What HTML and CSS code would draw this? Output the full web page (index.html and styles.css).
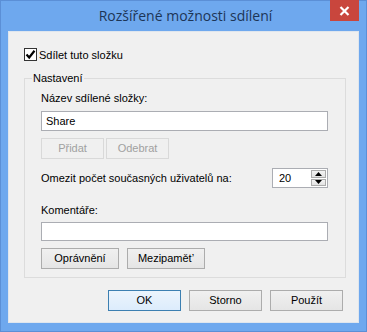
FILE: index.html
```html
<!DOCTYPE html>
<html lang="cs">
<head>
    <meta charset="UTF-8">
    <title>Rozšířené možnosti sdílení</title>
    <link rel="stylesheet" href="styles.css">
</head>
<body>
    <div class="window">
        <div class="titlebar">
            <span class="title">Rozšířené možnosti sdílení</span>
            <div class="close">
                <svg width="11" height="10" viewBox="0 0 11 10">
                    <path d="M1.5 1 L9.5 9 M9.5 1 L1.5 9" stroke="#fff" stroke-width="2.2" fill="none"/>
                </svg>
            </div>
        </div>
        <div class="client">
            <div class="check-row">
                <span class="checkbox">
                    <svg width="11" height="11" viewBox="0 0 11 11">
                        <path d="M1.5 5.5 L4.2 8.5 L9.5 1.8" stroke="#000" stroke-width="2.2" fill="none"/>
                    </svg>
                </span>
                <span>Sdílet tuto složku</span>
            </div>

            <!-- Nastavení -->
            <div class="group">
                <span class="group-title">Nastavení</span>
                <div class="label">Název sdílené složky:</div>
                <div class="textbox">Share</div>
                <div class="btn-row">
                    <div class="btn disabled">Přidat</div>
                    <div class="btn disabled">Odebrat</div>
                </div>
                <div class="limit-row">
                    <span>Omezit počet současných uživatelů na:</span>
                    <div class="spin">
                        <span class="spin-value">20</span>
                        <div class="spin-arrows">
                            <div class="arrow">
                                <svg width="7" height="4" viewBox="0 0 7 4"><path d="M0 4 L3.5 0 L7 4 Z" fill="#000"/></svg>
                            </div>
                            <div class="arrow">
                                <svg width="7" height="4" viewBox="0 0 7 4"><path d="M0 0 L3.5 4 L7 0 Z" fill="#000"/></svg>
                            </div>
                        </div>
                    </div>
                </div>
                <div class="label comments">Komentáře:</div>
                <div class="textbox short"></div>
                <div class="btn-row bottom">
                    <div class="btn wide">Oprávnění</div>
                    <div class="btn wide">Mezipamět’</div>
                </div>
            </div>

            <div class="dialog-buttons">
                <div class="btn main default">OK</div>
                <div class="btn main">Storno</div>
                <div class="btn main">Použít</div>
            </div>
        </div>
    </div>
</body>
</html>
```

FILE: styles.css
```css
body {
    margin: 0;
    padding: 0;
    background-color: #fff;
    font-family: 'Liberation Sans', Arial, sans-serif;
    font-size: 11px;
    color: #000;
}
.window {
    width: 367px;
    height: 332px;
    box-sizing: border-box;
    background-color: #6ea8ee;
    border: 1px solid #5b8fd6;
    padding: 0 7px 8px 7px;
    display: flex;
    flex-direction: column;
}
.titlebar {
    height: 30px;
    display: flex;
    align-items: flex-start;
    position: relative;
}
.title {
    flex: 1;
    text-align: center;
    font-family: 'Open Sans', 'Noto Sans', sans-serif;
    font-size: 14px;
    color: #1d3556;
    margin-top: 5px;
    padding-left: 4px;
}
.close {
    position: absolute;
    right: 0;
    top: -1px;
    width: 29px;
    height: 21px;
    background-color: #c9463d;
    display: flex;
    align-items: center;
    justify-content: center;
}
.client {
    flex: 1;
    background-color: #f0f0f0;
    border: 1px solid #dfe6ee;
    padding: 0 0 0 15px;
    display: flex;
    flex-direction: column;
}
.check-row {
    display: flex;
    align-items: center;
    gap: 2px;
    margin-top: 16px;
    height: 13px;
}
.checkbox {
    width: 11px;
    height: 11px;
    border: 1px solid #333;
    background-color: #fff;
    display: flex;
    align-items: center;
    justify-content: center;
}
.group {
    position: relative;
    margin-top: 17px;
    width: 322px;
    height: 200px;
    box-sizing: border-box;
    border: 1px solid #dcdcdc;
    padding: 13px 17px 0 16px;
    display: flex;
    flex-direction: column;
}
.group-title {
    position: absolute;
    top: -7px;
    left: 7px;
    padding: 0 1px;
    line-height: 13px;
    background-color: #f0f0f0;
}
.label {
    height: 13px;
    line-height: 13px;
}
.textbox {
    margin-top: 6px;
    height: 18px;
    line-height: 18px;
    border: 1px solid #abadb3;
    background-color: #fff;
    padding-left: 4px;
}
.textbox.short {
    height: 17px;
    margin-top: 5px;
}
.btn-row {
    display: flex;
    gap: 2px;
    margin-top: 7px;
}
.btn {
    height: 19px;
    line-height: 19px;
    width: 61px;
    text-align: center;
    border: 1px solid #acacac;
    background: linear-gradient(#f0f0f0, #e5e5e5);
}
.btn.disabled {
    color: #a0a0a0;
    border-color: #d9d9d9;
    background: #f0f0f0;
}
.btn-row.bottom {
    gap: 8px;
    margin-top: 7px;
}
.btn.wide {
    width: 76px;
}
.limit-row {
    display: flex;
    align-items: center;
    justify-content: space-between;
    margin-top: 9px;
}
.spin {
    width: 54px;
    height: 18px;
    border: 1px solid #abadb3;
    background-color: #fff;
    display: flex;
    align-items: center;
}
.spin-value {
    flex: 1;
    padding-left: 6px;
}
.spin-arrows {
    width: 15px;
    height: 16px;
    margin-right: 1px;
    display: flex;
    flex-direction: column;
    gap: 1px;
}
.arrow {
    flex: 1;
    border: 1px solid #acacac;
    background: linear-gradient(#f3f3f3, #e3e3e3);
    display: flex;
    align-items: center;
    justify-content: center;
}
.comments {
    margin-top: 16px;
}
.dialog-buttons {
    display: flex;
    gap: 8px;
    margin: 12px 0 0 84px;
}
.btn.main {
    width: 71px;
}
.btn.default {
    border-color: #3c7fb1;
    background: linear-gradient(#ecf4fc, #dcecfc);
}
```
